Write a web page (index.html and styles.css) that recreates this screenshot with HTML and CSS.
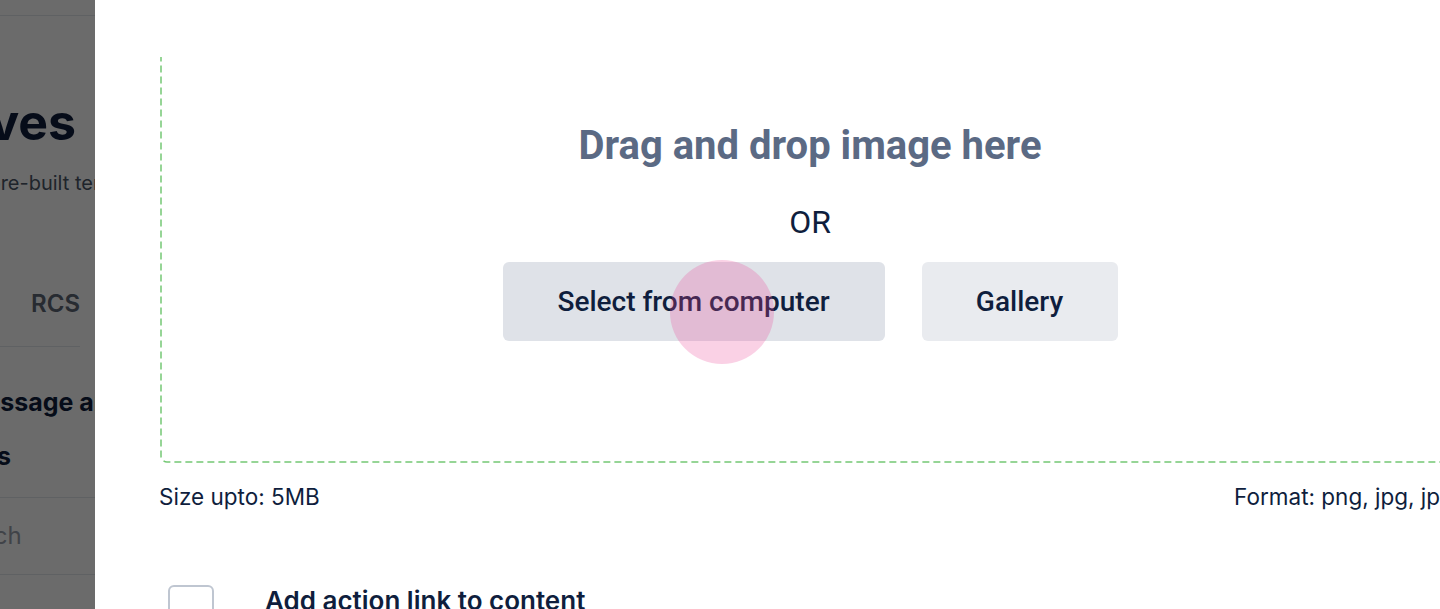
FILE: index.html
```html
<!DOCTYPE html>
<html lang="en">
<head>
  <meta charset="UTF-8">
  <title>Upload image</title>
  <link rel="stylesheet" href="styles.css">
</head>
<body>
  <!-- Page behind the drawer -->
  <div class="page">
    <div class="page-top"></div>
    <h1 class="page-title">Archives</h1>
    <p class="page-sub">Pick from pre-built templates</p>
    <div class="tabs">
      <span class="tab">SMS</span>
      <span class="tab">RCS</span>
    </div>
    <div class="page-h2">
      <div class="h2-line h2-first">Message and buttons</div>
      <div class="h2-line h2-last">Templates</div>
    </div>
    <div class="search">Search</div>
  </div>

  <div class="overlay"></div>

  <!-- Drawer -->
  <aside class="drawer">
    <div class="dropzone">
      <svg class="dash"><rect></rect></svg>
      <div class="drop-title">Drag and drop image here</div>
      <div class="drop-or">OR</div>
      <div class="drop-actions">
        <button class="btn btn-primary">Select from computer</button>
        <button class="btn btn-light">Gallery</button>
      </div>
    </div>
    <div class="drop-meta">
      <span>Size upto: 5MB</span>
      <span>Format: png, jpg, jpeg</span>
    </div>
    <label class="check-row">
      <span class="check-box"></span>
      <span class="check-label">Add action link to content</span>
    </label>
  </aside>

  <div class="tap"></div>
</body>
</html>
```
FILE: styles.css
```css
* {
  box-sizing: border-box;
}
body {
  margin: 0;
  font-family: Inter, "Noto Sans", sans-serif;
  color: #0f1e3d;
  background: #fff;
  height: 609px;
  overflow: hidden;
}

/* background page */
.page {
  width: 95px;
  overflow: hidden;
  white-space: nowrap;
}
.page-top {
  height: 16px;
  border-bottom: 1px solid #e3e6eb;
}
.page-title {
  display: flex;
  justify-content: flex-end;
  width: 76px;
  margin: 78px 0 0;
  font-size: 50px;
  font-weight: 700;
  line-height: 56px;
  color: #0f1e3d;
}
.page-sub {
  margin: 20px 0 0 -107px;
  font-size: 20px;
  line-height: 26px;
  color: #4b5668;
}
.tabs {
  display: flex;
  justify-content: flex-end;
  gap: 60px;
  width: 80px;
  margin-top: 93px;
  padding-bottom: 27px;
  border-bottom: 1px solid #e3e6eb;
}
.tab {
  font-size: 24px;
  font-weight: 600;
  line-height: 30px;
  color: #5d6676;
}
.page-h2 {
  margin-top: 28px;
  padding-bottom: 14px;
  border-bottom: 1px solid #e3e6eb;
  font-size: 25px;
  font-weight: 700;
  line-height: 54px;
  color: #0f1e3d;
}
.h2-first {
  margin-left: -38px;
}
.h2-last {
  display: flex;
  justify-content: flex-end;
  width: 11px;
}
.search {
  margin-left: -58px;
  padding: 23px 0;
  font-size: 24px;
  line-height: 30px;
  color: #9aa1ad;
  border-bottom: 1px solid #e3e6eb;
}
.overlay {
  position: fixed;
  inset: 0;
  background: rgba(0, 0, 0, 0.58);
}

/* drawer */
.drawer {
  position: fixed;
  top: 0;
  left: 95px;
  width: 1400px;
  height: 100%;
  overflow: hidden;
  background: #fff;
  padding: 57px 0 0 65px;
}
.dropzone {
  position: relative;
  width: 1300px;
  height: 406px;
  padding-top: 65px;
  text-align: center;
}
.dash {
  position: absolute;
  left: 0;
  top: 0;
  width: 100%;
  height: 100%;
  overflow: hidden;
  pointer-events: none;
}
.dash rect {
  x: 1px;
  y: -100px;
  width: calc(100% - 2px);
  height: calc(100% + 99px);
  rx: 6px;
  fill: none;
  stroke: #74c874;
  stroke-width: 1.5px;
  stroke-dasharray: 7 4;
}
.drop-title {
  font-family: Roboto, sans-serif;
  font-size: 40px;
  font-weight: 700;
  line-height: 48px;
  color: #5b6a84;
}
.drop-or {
  margin-top: 33px;
  font-family: Roboto, sans-serif;
  font-size: 32px;
  line-height: 38px;
  color: #0f1e3d;
}
.drop-actions {
  display: flex;
  justify-content: center;
  gap: 37px;
  margin-top: 21px;
}
.btn {
  height: 79px;
  padding: 0;
  border: none;
  border-radius: 6px;
  font-family: Roboto, sans-serif;
  font-size: 28px;
  font-weight: 500;
  color: #0f1e3d;
  cursor: pointer;
}
.btn-primary {
  width: 382px;
  background: #dfe2e8;
}
.btn-light {
  width: 196px;
  background: #e9ebef;
}
.drop-meta {
  display: flex;
  justify-content: space-between;
  width: 1308px;
  margin: 20px 0 0 -1px;
  font-size: 22.5px;
  line-height: 28px;
  color: #0f1e3d;
}
.check-row {
  display: flex;
  align-items: flex-start;
  gap: 51px;
  margin: 74px 0 0 8px;
}
.check-box {
  width: 46px;
  height: 46px;
  border: 2.5px solid #bfc6d1;
  border-radius: 6px;
}
.check-label {
  font-size: 26px;
  font-weight: 600;
  line-height: 32px;
  color: #0f1e3d;
}

/* click indicator */
.tap {
  position: fixed;
  left: 670px;
  top: 260px;
  width: 104px;
  height: 104px;
  border-radius: 50%;
  background: rgba(236, 72, 153, 0.25);
}
```
